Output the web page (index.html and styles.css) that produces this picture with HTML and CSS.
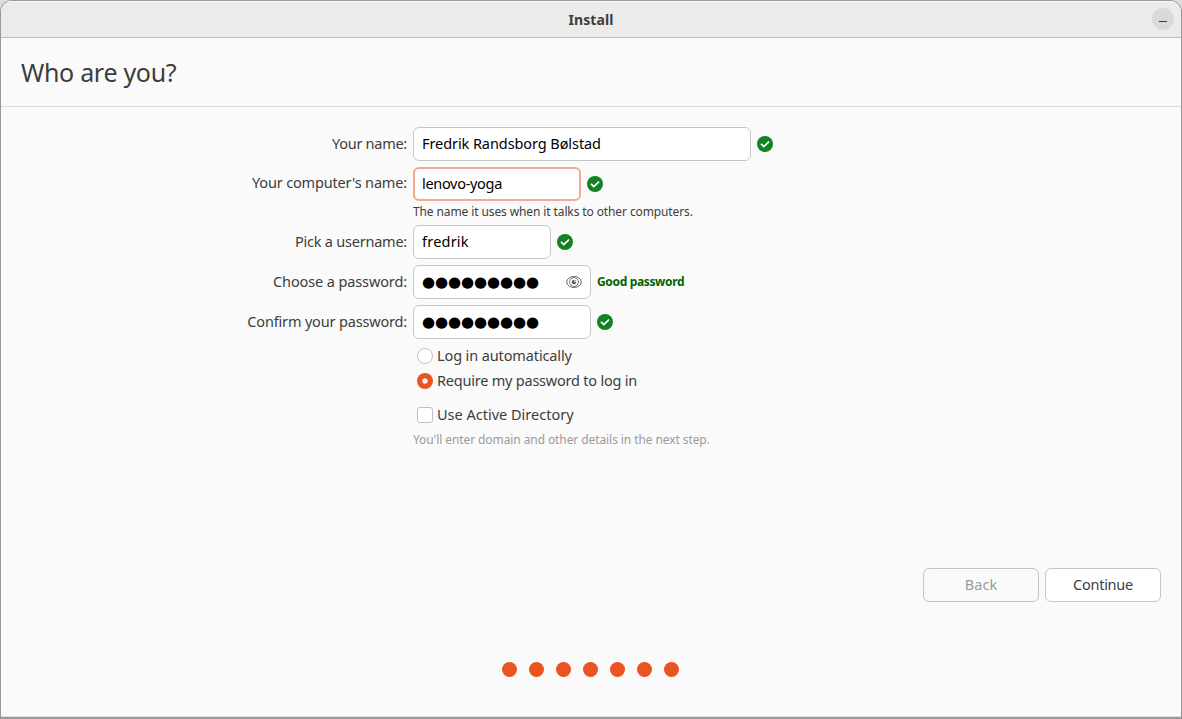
FILE: index.html
```html
<!DOCTYPE html>
<html lang="en">
<head>
<meta charset="utf-8">
<title>Install</title>
<link rel="stylesheet" href="styles.css">
</head>
<body>
<svg class="defs" width="0" height="0" aria-hidden="true">
  <symbol id="check" viewBox="0 0 16 16">
    <circle cx="8" cy="8" r="8" fill="#128223"/>
    <path d="M4 7.9 6.8 10.5 12 5.6" fill="none" stroke="#fff" stroke-width="1.7"/>
  </symbol>
</svg>
<div class="window">
  <header class="titlebar">
    <span class="title">Install</span>
    <button class="minimize" aria-label="Minimize"><span class="minimize-bar"></span></button>
  </header>
  <div class="heading"><h1>Who are you?</h1></div>
  <main class="form">
    <div class="row">
      <label class="label t-name">Your name:</label>
      <div class="entry entry-full"><span class="t-fullname">Fredrik Randsborg Bølstad</span></div>
      <svg class="ok"><use href="#check"/></svg>
    </div>
    <div class="row">
      <label class="label label-raised t-computer">Your computer's name:</label>
      <div class="entry entry-host focused"><span class="t-host">lenovo-yoga</span></div>
      <svg class="ok"><use href="#check"/></svg>
    </div>
    <p class="hint">The name it uses when it talks to other computers.</p>
    <div class="row">
      <label class="label t-pick">Pick a username:</label>
      <div class="entry entry-user"><span class="t-user">fredrik</span></div>
      <svg class="ok"><use href="#check"/></svg>
    </div>
    <div class="row">
      <label class="label t-choose">Choose a password:</label>
      <div class="entry entry-pass">
        <span class="dots">●●●●●●●●●</span>
        <svg class="eye" viewBox="0 0 16 16" fill="none" stroke="#555">
          <ellipse cx="8" cy="8" rx="7.3" ry="5.5" stroke-width=".9"/>
          <circle cx="8" cy="8" r="4.4" stroke-width=".8"/>
          <circle cx="8" cy="8" r="2.2" fill="#555" stroke="none"/>
          <path d="M8.4 5.8V7.6h2" stroke="#fff" stroke-width=".8"/>
        </svg>
      </div>
      <strong class="strength">Good password</strong>
    </div>
    <div class="row">
      <label class="label t-confirm">Confirm your password:</label>
      <div class="entry entry-pass"><span class="dots">●●●●●●●●●</span></div>
      <svg class="ok"><use href="#check"/></svg>
    </div>
    <div class="options">
      <label class="option"><span class="radio"></span><span class="option-text t-auto">Log in automatically</span></label>
      <label class="option"><span class="radio radio-on"></span><span class="option-text t-require">Require my password to log in</span></label>
      <label class="option option-ad"><span class="checkbox"></span><span class="option-text">Use Active Directory</span></label>
    </div>
    <p class="hint hint-muted">You'll enter domain and other details in the next step.</p>
  </main>
  <div class="actions">
    <button class="button button-disabled">Back</button>
    <button class="button t-continue">Continue</button>
  </div>
  <div class="progress"><i></i><i></i><i></i><i></i><i></i><i></i><i></i></div>
</div>
</body>
</html>
```
FILE: styles.css
```css
* { box-sizing: border-box; }
body { margin: 0; background: #dedede; font: 14.5px/20px "Noto Sans", sans-serif; color: #3d3d3d; }
.defs { position: absolute; }
.window { width: 1182px; height: 719px; display: flex; flex-direction: column; background: #fafafa; border: 1px solid #999; border-bottom-width: 2px; border-radius: 12px 12px 0 0; overflow: hidden; box-shadow: inset 0 -1px #dedede; }
.titlebar { height: 37px; flex: none; display: grid; grid-template-columns: 1fr auto 1fr; align-items: center; background: #ebebeb; border-bottom: 1px solid #bdbdbd; box-shadow: inset 0 1px #fafafa; }
.title { grid-column: 2; padding-top: 2px; font-weight: 700; font-size: 14px; letter-spacing: .07px; }
.minimize { justify-self: end; width: 22px; height: 22px; margin-right: 7px; padding: 0; display: grid; place-items: center; border: 0; border-radius: 50%; background: #dadada; }
.minimize-bar { width: 8px; height: 1px; margin-top: 5px; background: #3d3d3d; }
.heading { height: 69px; flex: none; display: flex; align-items: center; padding-left: 20px; border-bottom: 1px solid #dcdcdc; }
h1 { margin: 0; font-weight: 400; font-size: 25px; line-height: 34px; letter-spacing: -.3px; }
.form { padding-top: 20px; height: 461px; flex: none; }
.row { height: 34px; display: flex; align-items: center; gap: 6px; margin-bottom: 6px; }
.label { width: 406px; padding-bottom: 2px; text-align: right; white-space: nowrap; }
.label-raised { padding-bottom: 4px; }
.entry { height: 34px; display: flex; align-items: center; padding: 0 8px 2px; border: 1px solid #c6c6c6; border-radius: 6px; background: #fff; color: #000; white-space: nowrap; }
.entry-full { width: 338px; }
.entry-host { width: 168px; }
.entry-user { width: 138px; }
.entry-pass { width: 178px; padding-bottom: 0; justify-content: space-between; }
.focused { border: 2px solid #f4aa90; padding: 0 7px 2px; }
.ok { width: 16px; height: 16px; }
.dots { font: 15px/20px "DejaVu Sans", sans-serif; letter-spacing: -.1px; padding-bottom: 1px; }
.eye { width: 16px; height: 16px; }
.strength { color: #006400; font-size: 12px; letter-spacing: -.35px; }
.hint { margin: -6px 0 0 412px; height: 24px; font-size: 12px; line-height: 22px; letter-spacing: -.11px; white-space: nowrap; }
.hint-muted { margin-top: -6px; color: #9b9b9b; letter-spacing: -.09px; }
.options { padding: 3px 0 0 416px; }
.option { height: 16px; display: flex; align-items: center; gap: 4px; margin-bottom: 9px; white-space: nowrap; }
.option-ad { margin: 18px 0 12px; }
.option-text { padding-bottom: 2px; }
.radio, .checkbox { width: 16px; height: 16px; border: 1px solid #bfbfbf; border-radius: 50%; background: #fff; }
.checkbox { border-radius: 3px; }
.radio-on { border: 0; background: radial-gradient(circle, #fff 2.2px, #e95420 3.1px); }
.actions { display: flex; justify-content: flex-end; gap: 6px; padding-right: 20px; }
.button { width: 116px; height: 34px; padding: 0 0 2px; border: 1px solid #c6c6c6; border-radius: 6px; background: #fff; color: inherit; font: inherit; }
.button-disabled { background: #fafafa; color: #9b9b9b; }
.progress { display: flex; justify-content: center; gap: 12px; margin-top: 60px; padding-right: 2px; }
.progress i { width: 15px; height: 15px; border-radius: 50%; background: #e95420; }

/* Per-string tracking */
.t-name { letter-spacing: -.27px; }
.t-fullname { letter-spacing: -.08px; }
.t-computer { letter-spacing: -.16px; }
.t-host { letter-spacing: -.31px; }
.t-pick { letter-spacing: -.23px; }
.t-user { letter-spacing: .22px; }
.t-choose { letter-spacing: -.12px; }
.t-confirm { letter-spacing: -.17px; }
.t-auto { letter-spacing: -.12px; }
.t-require { letter-spacing: -.22px; }
.t-continue { letter-spacing: -.25px; }
```
